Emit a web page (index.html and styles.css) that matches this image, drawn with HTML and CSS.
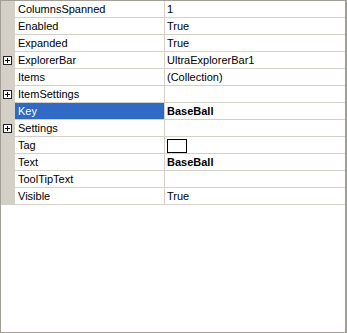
FILE: index.html
```html
<!DOCTYPE html>
<html lang="en">
<head>
  <meta charset="UTF-8" />
  <title>Property Grid</title>
  <link rel="stylesheet" href="styles.css">
</head>
<body>
  <div class="grid">
    <div class="row">
      <div class="gutter"></div>
      <div class="name">ColumnsSpanned</div>
      <div class="value">1</div>
    </div>
    <div class="row">
      <div class="gutter"></div>
      <div class="name">Enabled</div>
      <div class="value">True</div>
    </div>
    <div class="row">
      <div class="gutter"></div>
      <div class="name">Expanded</div>
      <div class="value">True</div>
    </div>
    <div class="row">
      <div class="gutter">
        <svg class="expander" width="9" height="9" viewBox="0 0 9 9">
          <rect x="0.5" y="0.5" width="8" height="8" fill="#fff" stroke="#222"/>
          <path d="M2 4.5h5M4.5 2v5" stroke="#000"/>
        </svg>
      </div>
      <div class="name">ExplorerBar</div>
      <div class="value">UltraExplorerBar1</div>
    </div>
    <div class="row">
      <div class="gutter"></div>
      <div class="name">Items</div>
      <div class="value">(Collection)</div>
    </div>
    <div class="row">
      <div class="gutter">
        <svg class="expander" width="9" height="9" viewBox="0 0 9 9">
          <rect x="0.5" y="0.5" width="8" height="8" fill="#fff" stroke="#222"/>
          <path d="M2 4.5h5M4.5 2v5" stroke="#000"/>
        </svg>
      </div>
      <div class="name">ItemSettings</div>
      <div class="value"></div>
    </div>
    <div class="row">
      <div class="gutter"></div>
      <div class="name selected">Key</div>
      <div class="value bold">BaseBall</div>
    </div>
    <div class="row">
      <div class="gutter">
        <svg class="expander" width="9" height="9" viewBox="0 0 9 9">
          <rect x="0.5" y="0.5" width="8" height="8" fill="#fff" stroke="#222"/>
          <path d="M2 4.5h5M4.5 2v5" stroke="#000"/>
        </svg>
      </div>
      <div class="name">Settings</div>
      <div class="value"></div>
    </div>
    <div class="row">
      <div class="gutter"></div>
      <div class="name">Tag</div>
      <div class="value"><span class="tag-box"></span></div>
    </div>
    <div class="row">
      <div class="gutter"></div>
      <div class="name">Text</div>
      <div class="value bold">BaseBall</div>
    </div>
    <div class="row">
      <div class="gutter"></div>
      <div class="name">ToolTipText</div>
      <div class="value"></div>
    </div>
    <div class="row">
      <div class="gutter"></div>
      <div class="name">Visible</div>
      <div class="value">True</div>
    </div>
  </div>
</body>
</html>
```

FILE: styles.css
```css
body {
  margin: 0;
  font-family: Tahoma, 'Liberation Sans', sans-serif;
  font-size: 11px;
  color: #000;
  background: #fff;
}
.grid {
  box-sizing: border-box;
  width: 347px;
  height: 333px;
  border: 1px solid #a19e95;
  border-right-width: 2px;
  background: #fff;
}
.row {
  display: flex;
  height: 16px;
  border-bottom: 1px solid #d4d0c8;
}
.gutter {
  width: 14px;
  background: #d4d0c8;
  display: flex;
  align-items: center;
  padding-left: 2px;
  box-sizing: border-box;
}
.expander {
  display: block;
}
.name {
  width: 150px;
  padding-left: 3px;
  box-sizing: border-box;
  border-right: 1px solid #d4d0c8;
  line-height: 16px;
  white-space: nowrap;
}
.name.selected {
  background: #316ac5;
  color: #fff;
}
.value {
  flex: 1;
  padding-left: 2px;
  line-height: 16px;
  white-space: nowrap;
}
.bold {
  font-weight: bold;
}
.tag-box {
  display: block;
  box-sizing: border-box;
  width: 20px;
  height: 14px;
  margin-top: 2px;
  border: 1px solid #000;
  background: #fff;
}
```
